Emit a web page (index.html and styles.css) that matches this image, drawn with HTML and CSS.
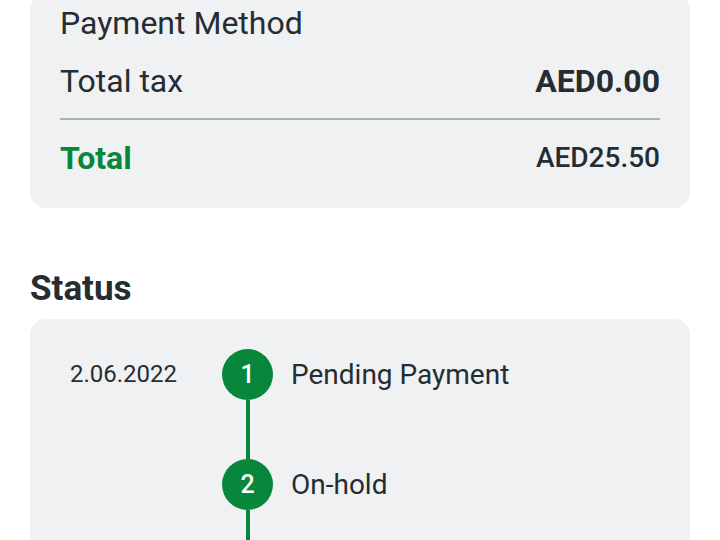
FILE: index.html
```html
<!DOCTYPE html>
<html>
<head>
<meta charset="utf-8">
<link rel="stylesheet" href="styles.css">
</head>
<body>
<div class="page">
  <section class="card summary">
    <div class="row"><span class="label">Payment Method</span></div>
    <div class="row"><span class="label">Total tax</span><span class="value strong">AED0.00</span></div>
    <div class="divider"></div>
    <div class="row total"><span class="label green">Total</span><span class="value">AED25.50</span></div>
  </section>

  <h2 class="heading">Status</h2>

  <section class="card timeline">
    <div class="step">
      <div class="date">2.06.2022</div>
      <div class="marker"><div class="dot">1</div><div class="line"></div></div>
      <div class="step-label">Pending Payment</div>
    </div>
    <div class="step">
      <div class="date"></div>
      <div class="marker"><div class="dot">2</div><div class="line"></div></div>
      <div class="step-label">On-hold</div>
    </div>
  </section>
</div>
</body>
</html>
```
FILE: styles.css
```css
html, body {
  margin: 0;
  padding: 0;
  background: #ffffff;
  overflow: hidden;
}
body {
  font-family: Roboto, "Liberation Sans", sans-serif;
  color: #252d33;
}
.page {
  padding: 0 30px;
}
.card {
  background: #eff1f3;
  border-radius: 16px;
}
.summary {
  margin-top: -6px;
  padding: 0 30px 21px 30px;
}
.row {
  display: flex;
  justify-content: space-between;
  align-items: center;
  height: 58px;
  line-height: 58px;
  font-size: 32px;
}
.value {
  font-weight: 500;
  font-size: 28px;
}
.value.strong {
  font-weight: 700;
  font-size: 32px;
}
.divider {
  height: 2px;
  background: #a8b2b2;
  margin: 8px 0 9px 0;
}
.green {
  color: #08873c;
  font-weight: 700;
}
.heading {
  margin: 61px 0 10px 0;
  font-size: 35px;
  line-height: 40px;
  font-weight: 700;
}
.timeline {
  padding: 30px 40px 0 40px;
  height: 240px;
}
.step {
  display: flex;
  align-items: flex-start;
}
.date {
  width: 152px;
  font-size: 24px;
  line-height: 51px;
}
.marker {
  width: 51px;
  display: flex;
  flex-direction: column;
  align-items: center;
}
.dot {
  width: 51px;
  height: 51px;
  border-radius: 50%;
  background: #08873c;
  color: #ffffff;
  font-weight: 500;
  font-size: 25px;
  line-height: 51px;
  text-align: center;
}
.line {
  width: 4px;
  height: 59px;
  background: #08873c;
}
.step-label {
  margin-left: 18px;
  font-size: 28px;
  line-height: 51px;
}
```
